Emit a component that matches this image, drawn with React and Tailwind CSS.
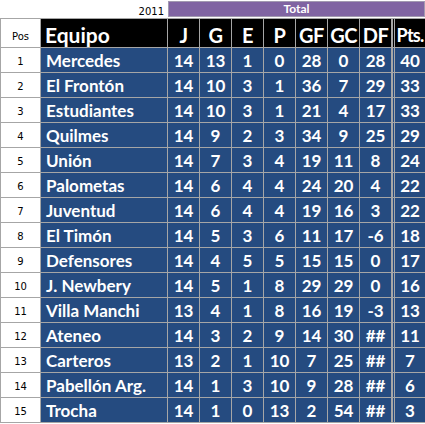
import React from "react";

const rows = [
  [1, "Mercedes", 14, 13, 1, 0, 28, 0, 28, 40],
  [2, "El Frontón", 14, 10, 3, 1, 36, 7, 29, 33],
  [3, "Estudiantes", 14, 10, 3, 1, 21, 4, 17, 33],
  [4, "Quilmes", 14, 9, 2, 3, 34, 9, 25, 29],
  [5, "Unión", 14, 7, 3, 4, 19, 11, 8, 24],
  [6, "Palometas", 14, 6, 4, 4, 24, 20, 4, 22],
  [7, "Juventud", 14, 6, 4, 4, 19, 16, 3, 22],
  [8, "El Timón", 14, 5, 3, 6, 11, 17, -6, 18],
  [9, "Defensores", 14, 4, 5, 5, 15, 15, 0, 17],
  [10, "J. Newbery", 14, 5, 1, 8, 29, 29, 0, 16],
  [11, "Villa Manchi", 13, 4, 1, 8, 16, 19, -3, 13],
  [12, "Ateneo", 14, 3, 2, 9, 14, 30, "##", 11],
  [13, "Carteros", 13, 2, 1, 10, 7, 25, "##", 7],
  [14, "Pabellón Arg.", 14, 1, 3, 10, 9, 28, "##", 6],
  [15, "Trocha", 14, 1, 0, 13, 2, 54, "##", 3],
];

const heads = ["J", "G", "E", "P", "GF", "GC", "DF"];

export default function App() {
  return (
    <div className="w-[425px] h-[424px] bg-white overflow-hidden">
      <div className="grid grid-cols-[41px_127px_repeat(7,32px)_33px]">
        {/* top row */}
        <div className="h-[18px]" />
        <div className="h-[18px] flex items-end justify-end pr-[4px] pb-[1px] text-[10px] text-black leading-none font-['DejaVu_Sans',sans-serif]">
          2011
        </div>
        <div className="col-span-8 h-[18px] pt-[1px] pb-[1px]">
          <div className="h-full bg-[#8064a2] border border-[#a29ab0] flex items-center justify-center text-white text-[12px] font-bold leading-none font-[Lato,sans-serif]">
            Total
          </div>
        </div>

        {/* header row */}
        <div className="h-[30px] border border-[#a6a6a6] flex items-end justify-center pb-[5px] text-[10px] text-black leading-none font-['DejaVu_Sans',sans-serif]">
          Pos
        </div>
        <div className="h-[30px] bg-black border-t border-b border-r border-[#a6a6a6] flex items-center pl-[4px] pt-[3px] text-white text-[21px] font-bold leading-none font-[Lato,sans-serif]">
          Equipo
        </div>
        {heads.map((h) => (
          <div
            key={h}
            className="h-[30px] bg-black border-t border-b border-r border-[#a6a6a6] flex items-center justify-center pt-[3px] text-white text-[20px] font-bold leading-none font-[Lato,sans-serif] tracking-[-0.5px]"
          >
            {h}
          </div>
        ))}
        <div className="h-[30px] bg-black border-t border-b border-l-[3px] border-double border-[#a6a6a6] flex items-center justify-center pt-[3px] text-white text-[18px] font-bold leading-none font-[Lato,sans-serif] tracking-[-0.8px] whitespace-nowrap">
          Pts.
        </div>

        {rows.map((r) => (
          <React.Fragment key={r[0]}>
            <div className="h-[25px] border-l border-r border-b border-[#a6a6a6] flex items-center justify-center pt-[3px] text-[10px] text-black leading-none font-['DejaVu_Sans',sans-serif]">
              {r[0]}
            </div>
            <div className="h-[25px] bg-[#254b80] border-b border-r border-[#a6a6a6] flex items-center pl-[5px] text-white text-[17px] font-bold leading-none font-[Lato,sans-serif]">
              {r[1]}
            </div>
            {r.slice(2, 9).map((v, i) => (
              <div
                key={i}
                className="h-[25px] bg-[#254b80] border-b border-r border-[#a6a6a6] flex items-center justify-center text-white text-[17px] font-bold leading-none font-[Lato,sans-serif]"
              >
                {v}
              </div>
            ))}
            <div className="h-[25px] bg-[#254b80] border-b border-l-[3px] border-double border-[#a6a6a6] flex items-center justify-center text-white text-[17px] font-bold leading-none font-[Lato,sans-serif]">
              {r[9]}
            </div>
          </React.Fragment>
        ))}
      </div>
    </div>
  );
}
